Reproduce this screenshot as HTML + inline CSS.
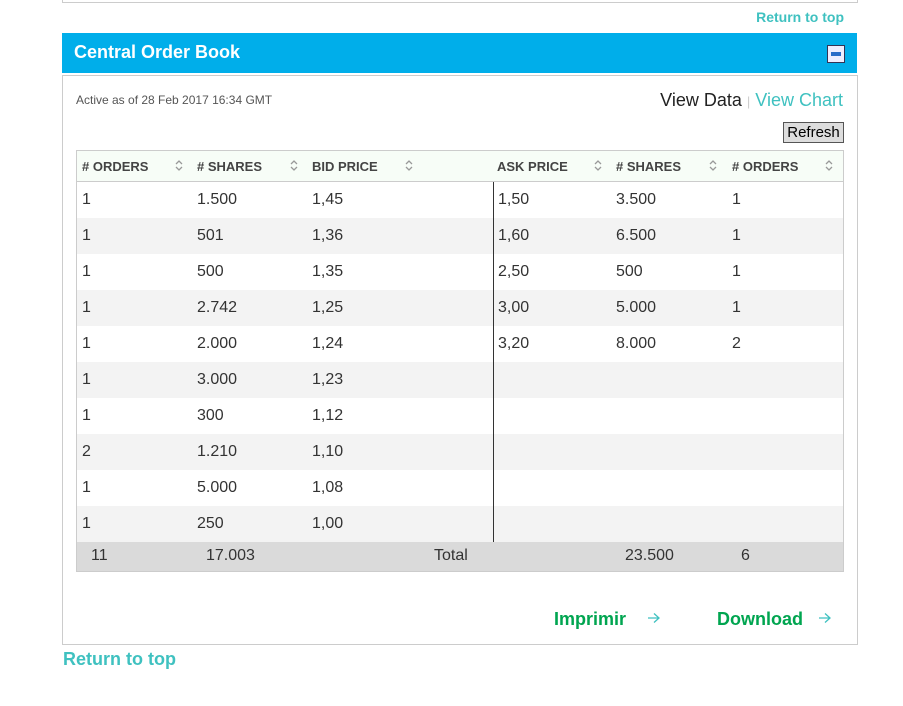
<!DOCTYPE html>
<html><head><meta charset="utf-8"><style>
*{margin:0;padding:0;box-sizing:border-box}
body{width:903px;height:706px;background:#fff;position:relative;font-family:"Liberation Sans",sans-serif;color:#333;overflow:hidden}
.a{position:absolute;white-space:nowrap}
.teal{color:#3fc1c0}
.row{position:absolute;left:77px;width:766px;height:36px}
.c{position:absolute;top:9px;font-size:16px;color:#333}
.h{position:absolute;top:8px;font-size:13px;font-weight:bold;color:#444}
.s{position:absolute;top:8px}
</style></head><body>
<div class="a" style="left:62px;top:-2px;width:796px;height:5px;border:1px solid #ccc;border-top:none"></div>
<div class="a teal" style="right:59px;top:9px;font-size:14px;font-weight:bold">Return to top</div>
<div class="a" style="left:62px;top:33px;width:795px;height:40px;background:#00aeea"></div>
<div class="a" style="left:74px;top:42px;font-size:18px;font-weight:bold;color:#fff">Central Order Book</div>
<div class="a" style="left:827px;top:45px;width:18px;height:18px;background:#eef;border:1px solid #335"><div style="position:absolute;left:3px;top:6px;width:10px;height:4px;background:#2a6dc8"></div></div>
<div class="a" style="left:62px;top:75px;width:796px;height:570px;border:1px solid #ccc"></div>
<div class="a" style="left:76px;top:93px;font-size:12px;color:#555">Active as of 28 Feb 2017 16:34 GMT</div>
<div class="a" style="right:60px;top:90px;font-size:18px;color:#222">View Data <span style="color:#ccc;font-size:13px">|</span> <span class="teal">View Chart</span></div>
<div class="a" style="left:783px;top:122px;width:61px;height:21px;background:#ddd;border:1px solid #555;font-size:15px;color:#000;text-align:center;line-height:19px">Refresh</div>
<div class="a" style="left:76px;top:150px;width:768px;height:422px;border:1px solid #ccc"></div>
<svg width="0" height="0" style="position:absolute"><defs><g id="si"><path d="M1 5 L4 2 L7 5 M1 8 L4 11 L7 8" fill="none" stroke="#999" stroke-width="1.3"/></g></defs></svg>
<div class="row" style="top:151px;height:31px;background:#f7fdf7;border-bottom:1px solid #ccc">
<span class="h" style="left:5px">#&nbsp;ORDERS</span><svg class="s" style="left:98px" width="8" height="13"><use href="#si"/></svg>
<span class="h" style="left:120px">#&nbsp;SHARES</span><svg class="s" style="left:213px" width="8" height="13"><use href="#si"/></svg>
<span class="h" style="left:235px">BID PRICE</span><svg class="s" style="left:328px" width="8" height="13"><use href="#si"/></svg>
<span class="h" style="left:420px">ASK PRICE</span><svg class="s" style="left:517px" width="8" height="13"><use href="#si"/></svg>
<span class="h" style="left:539px">#&nbsp;SHARES</span><svg class="s" style="left:632px" width="8" height="13"><use href="#si"/></svg>
<span class="h" style="left:655px">#&nbsp;ORDERS</span><svg class="s" style="left:748px" width="8" height="13"><use href="#si"/></svg>
</div>
<div class="row" style="top:182px"><span class="c" style="left:5px">1</span><span class="c" style="left:120px">1.500</span><span class="c" style="left:235px">1,45</span><span class="c" style="left:421px">1,50</span><span class="c" style="left:539px">3.500</span><span class="c" style="left:655px">1</span></div>
<div class="row" style="top:218px;background:#f3f3f3"><span class="c" style="left:5px">1</span><span class="c" style="left:120px">501</span><span class="c" style="left:235px">1,36</span><span class="c" style="left:421px">1,60</span><span class="c" style="left:539px">6.500</span><span class="c" style="left:655px">1</span></div>
<div class="row" style="top:254px"><span class="c" style="left:5px">1</span><span class="c" style="left:120px">500</span><span class="c" style="left:235px">1,35</span><span class="c" style="left:421px">2,50</span><span class="c" style="left:539px">500</span><span class="c" style="left:655px">1</span></div>
<div class="row" style="top:290px;background:#f3f3f3"><span class="c" style="left:5px">1</span><span class="c" style="left:120px">2.742</span><span class="c" style="left:235px">1,25</span><span class="c" style="left:421px">3,00</span><span class="c" style="left:539px">5.000</span><span class="c" style="left:655px">1</span></div>
<div class="row" style="top:326px"><span class="c" style="left:5px">1</span><span class="c" style="left:120px">2.000</span><span class="c" style="left:235px">1,24</span><span class="c" style="left:421px">3,20</span><span class="c" style="left:539px">8.000</span><span class="c" style="left:655px">2</span></div>
<div class="row" style="top:362px;background:#f3f3f3"><span class="c" style="left:5px">1</span><span class="c" style="left:120px">3.000</span><span class="c" style="left:235px">1,23</span></div>
<div class="row" style="top:398px"><span class="c" style="left:5px">1</span><span class="c" style="left:120px">300</span><span class="c" style="left:235px">1,12</span></div>
<div class="row" style="top:434px;background:#f3f3f3"><span class="c" style="left:5px">2</span><span class="c" style="left:120px">1.210</span><span class="c" style="left:235px">1,10</span></div>
<div class="row" style="top:470px"><span class="c" style="left:5px">1</span><span class="c" style="left:120px">5.000</span><span class="c" style="left:235px">1,08</span></div>
<div class="row" style="top:506px;background:#f3f3f3"><span class="c" style="left:5px">1</span><span class="c" style="left:120px">250</span><span class="c" style="left:235px">1,00</span></div>
<div class="a" style="left:493px;top:182px;width:1px;height:361px;background:#333"></div>
<div class="row" style="top:542px;height:29px;background:#dadada"><span class="c" style="left:14px;top:5px">11</span><span class="c" style="left:129px;top:5px">17.003</span><span class="c" style="left:357px;top:5px">Total</span><span class="c" style="left:548px;top:5px">23.500</span><span class="c" style="left:664px;top:5px">6</span></div>
<div class="a" style="left:554px;top:609px;font-size:18px;font-weight:bold;color:#00a550">Imprimir</div>
<svg class="a" style="left:647px;top:612px" width="14" height="12"><path d="M1 6 H12 M7 1.5 L12 6 L7 10.5" fill="none" stroke="#3fc1c0" stroke-width="1.3"/></svg>
<div class="a" style="left:717px;top:609px;font-size:18px;font-weight:bold;color:#00a550">Download</div>
<svg class="a" style="left:818px;top:612px" width="14" height="12"><path d="M1 6 H12 M7 1.5 L12 6 L7 10.5" fill="none" stroke="#3fc1c0" stroke-width="1.3"/></svg>
<div class="a teal" style="left:63px;top:649px;font-size:18px;font-weight:bold">Return to top</div>
</body></html>
